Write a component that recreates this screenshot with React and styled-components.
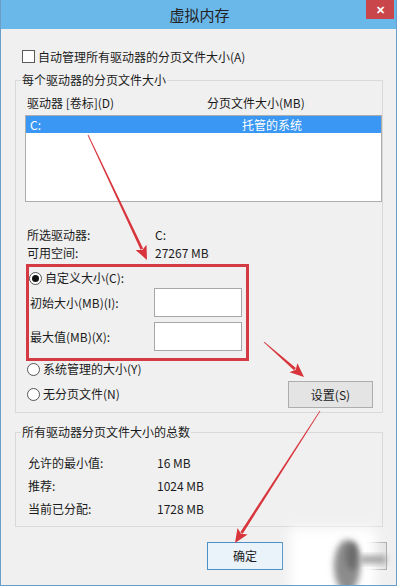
import React from 'react';
import styled, { createGlobalStyle } from 'styled-components';

const GlobalStyle = createGlobalStyle`
  html, body {
    margin: 0;
    padding: 0;
    background: #ffffff;
  }
  body {
    font-family: "Noto Sans CJK SC", "Noto Sans", "Liberation Sans", sans-serif;
    font-size: 12px;
    color: #1b1b1b;
  }
`;

const drives = [{ name: 'C:', size: '托管的系统', selected: true }];

const totals = [
  { label: '允许的最小值:', value: '16 MB' },
  { label: '推荐:', value: '1024 MB' },
  { label: '当前已分配:', value: '1728 MB' },
];

const arrows = [
  { x1: 88, y1: 135, x2: 147, y2: 260 },
  { x1: 264, y1: 342, x2: 304, y2: 377 },
  { x1: 320, y1: 411, x2: 235, y2: 543 },
];

function Arrow({ x1, y1, x2, y2 }) {
  const len = Math.hypot(x2 - x1, y2 - y1);
  const dx = (x2 - x1) / len;
  const dy = (y2 - y1) / len;
  const nx = -dy;
  const ny = dx;
  const head = 14;
  const bx = x2 - dx * head;
  const by = y2 - dy * head;
  const shaft = [
    [x1 + nx * 0.4, y1 + ny * 0.4],
    [bx + dx * 2 + nx * 1.4, by + dy * 2 + ny * 1.4],
    [bx + dx * 2 - nx * 1.4, by + dy * 2 - ny * 1.4],
    [x1 - nx * 0.4, y1 - ny * 0.4],
  ];
  const tip = [
    [x2, y2],
    [bx + nx * 6, by + ny * 6],
    [bx + dx * 3, by + dy * 3],
    [bx - nx * 6, by - ny * 6],
  ];
  const pts = (a) => a.map((p) => p.map((v) => v.toFixed(1)).join(',')).join(' ');
  return (
    <g fill="#d7353b">
      <polygon points={pts(shaft)} />
      <polygon points={pts(tip)} />
    </g>
  );
}

function App() {
  return (
    <>
      <GlobalStyle />
      <Window>
        <TitleBar>
          <span />
          <Title>虚拟内存</Title>
          <CloseButton>✕</CloseButton>
        </TitleBar>

        <Body>
          <CheckRow>
            <CheckBox />
            <span>自动管理所有驱动器的分页文件大小(A)</span>
          </CheckRow>

          <Group>
            <Legend>每个驱动器的分页文件大小</Legend>
            <ListHeader>
              <Col>驱动器 [卷标](D)</Col>
              <span>分页文件大小(MB)</span>
            </ListHeader>
            <ListBox>
              {drives.map((d) => (
                <ListItem key={d.name} $selected={d.selected}>
                  <DriveName>{d.name}</DriveName>
                  <span>{d.size}</span>
                </ListItem>
              ))}
            </ListBox>

            <InfoBlock>
              <InfoRow>
                <InfoLabel>所选驱动器:</InfoLabel>
                <span>C:</span>
              </InfoRow>
              <InfoRow>
                <InfoLabel>可用空间:</InfoLabel>
                <span>27267 MB</span>
              </InfoRow>
            </InfoBlock>

            <Highlight>
              <RadioRow>
                <Radio $checked />
                <span>自定义大小(C):</span>
              </RadioRow>
              <FieldRow>
                <FieldLabel>初始大小(MB)(I):</FieldLabel>
                <TextBox />
              </FieldRow>
              <FieldRow $gap>
                <FieldLabel>最大值(MB)(X):</FieldLabel>
                <TextBox />
              </FieldRow>
            </Highlight>

            <OptionsRow>
              <RadioStack>
                <RadioRow $outer>
                  <Radio />
                  <span>系统管理的大小(Y)</span>
                </RadioRow>
                <RadioRow $outer>
                  <Radio />
                  <span>无分页文件(N)</span>
                </RadioRow>
              </RadioStack>
              <SetButton>设置(S)</SetButton>
            </OptionsRow>
          </Group>

          <Group $second>
            <Legend>所有驱动器分页文件大小的总数</Legend>
            <TotalsList>
              {totals.map((t) => (
                <TotalRow key={t.label}>
                  <TotalLabel>{t.label}</TotalLabel>
                  <span>{t.value}</span>
                </TotalRow>
              ))}
            </TotalsList>
          </Group>

          <Footer>
            <DialogButton $default>确定</DialogButton>
            <DialogButton>取消</DialogButton>
          </Footer>
        </Body>

        <Overlay width="397" height="588" viewBox="0 0 397 588">
          <defs>
            <filter id="soft" x="-50%" y="-50%" width="200%" height="200%">
              <feGaussianBlur stdDeviation="6" />
            </filter>
            <filter id="softer" x="-50%" y="-50%" width="200%" height="200%">
              <feGaussianBlur stdDeviation="3" />
            </filter>
          </defs>
          <rect x="290" y="528" width="86" height="70" fill="#ffffff" filter="url(#soft)" />
          <ellipse cx="347" cy="566" rx="13" ry="26" fill="#8c8c8c" filter="url(#softer)" />
          <ellipse cx="352" cy="556" rx="6" ry="14" fill="#6a6a6a" filter="url(#softer)" />
          <rect x="360" y="556" width="26" height="7" fill="#9a9a9a" filter="url(#softer)" />
          {arrows.map((a, i) => (
            <Arrow key={i} {...a} />
          ))}
        </Overlay>
      </Window>
    </>
  );
}

const Window = styled.div`
  position: relative;
  width: 397px;
  height: 586px;
  box-sizing: border-box;
  background: #f0f0f0;
  border: 1px solid #6a9ec9;
  border-top: none;
  overflow: hidden;
`;

const TitleBar = styled.div`
  height: 29px;
  margin: 0 -1px;
  display: grid;
  grid-template-columns: 1fr auto 1fr;
  align-items: start;
  background: #6ab8ea;
`;

const Title = styled.div`
  font-size: 15px;
  line-height: 29px;
  color: #222;
  padding-left: 2px;
`;

const CloseButton = styled.div`
  justify-self: end;
  width: 28px;
  height: 19px;
  margin-right: 3px;
  background: #c9474b;
  color: #fff;
  font-size: 11px;
  font-weight: bold;
  line-height: 19px;
  text-align: center;
`;

const Body = styled.div`
  padding: 0 13px 0 14px;
`;

const CheckRow = styled.div`
  display: flex;
  align-items: center;
  gap: 3px;
  height: 16px;
  margin-top: 19px;
  padding-left: 7px;
`;

const CheckBox = styled.span`
  width: 11px;
  height: 11px;
  border: 1px solid #5a5a5a;
  background: #fff;
`;

const Group = styled.fieldset`
  margin: ${(p) => (p.$second ? '11px' : '8px')} 0 0 0;
  padding: 0 0 ${(p) => (p.$second ? '6px' : '4px')} 0;
  border: 1px solid #d9d9d9;
  min-width: 0;
`;

const Legend = styled.legend`
  margin-left: 5px;
  padding: 0 1px;
  line-height: 16px;
`;

const ListHeader = styled.div`
  display: flex;
  height: 16px;
  line-height: 16px;
  margin-top: 7px;
  padding-left: 11px;
`;

const Col = styled.span`
  width: 180px;
`;

const ListBox = styled.div`
  height: 85px;
  margin: 4px 0 0 9px;
  border: 1px solid #adadad;
  background: #fff;
`;

const ListItem = styled.div`
  display: flex;
  height: 17px;
  line-height: 17px;
  padding-left: 4px;
  background: ${(p) => (p.$selected ? '#3a97f3' : 'transparent')};
  color: ${(p) => (p.$selected ? '#fff' : 'inherit')};
`;

const DriveName = styled.span`
  width: 212px;
`;

const InfoBlock = styled.div`
  display: flex;
  flex-direction: column;
  gap: 2px;
  margin-top: 25px;
  padding-left: 11px;
`;

const InfoRow = styled.div`
  display: flex;
  height: 16px;
  line-height: 16px;
`;

const InfoLabel = styled.span`
  width: 128px;
`;

const Highlight = styled.div`
  width: 217px;
  margin: 3px 0 0 10px;
  padding: 3px 0 7px 0;
  border: 3px solid #d43a43;
`;

const RadioRow = styled.div`
  display: flex;
  align-items: center;
  gap: 3px;
  height: 16px;
  line-height: 16px;
  padding-left: ${(p) => (p.$outer ? '11px' : '0')};
`;

const Radio = styled.span`
  position: relative;
  width: 11px;
  height: 11px;
  border: 1px solid #555;
  border-radius: 50%;
  background: #fff;
  flex-shrink: 0;

  &::after {
    content: '';
    display: ${(p) => (p.$checked ? 'block' : 'none')};
    position: absolute;
    left: 2px;
    top: 2px;
    width: 7px;
    height: 7px;
    border-radius: 50%;
    background: #111;
  }
`;

const FieldRow = styled.div`
  display: flex;
  align-items: center;
  margin-top: ${(p) => (p.$gap ? '5px' : '2px')};
  padding-left: 1px;
`;

const FieldLabel = styled.span`
  width: 124px;
`;

const TextBox = styled.div`
  width: 86px;
  height: 27px;
  border: 1px solid #a7a7a7;
  background: #fff;
`;

const OptionsRow = styled.div`
  display: flex;
  justify-content: space-between;
  align-items: flex-start;
`;

const RadioStack = styled.div`
  display: flex;
  flex-direction: column;
  gap: 9px;
`;

const SetButton = styled.div`
  width: 83px;
  height: 25px;
  margin: 20px 9px 0 0;
  border: 1px solid #adadad;
  background: #e4e4e4;
  line-height: 25px;
  text-align: center;
`;

const TotalsList = styled.div`
  margin-top: 11px;
  padding-left: 12px;
`;

const TotalRow = styled.div`
  display: flex;
  height: 23px;
  line-height: 23px;
`;

const TotalLabel = styled.span`
  width: 129px;
`;

const Footer = styled.div`
  display: flex;
  justify-content: flex-end;
  gap: 28px;
  margin: 15px -4px 0 0;
`;

const DialogButton = styled.div`
  width: 74px;
  height: 26px;
  border: 1px solid ${(p) => (p.$default ? '#4a90c8' : '#adadad')};
  background: ${(p) => (p.$default ? '#eaf2fa' : '#e4e4e4')};
  line-height: 26px;
  text-align: center;
`;

const Overlay = styled.svg`
  position: absolute;
  left: -1px;
  top: 0;
  pointer-events: none;
`;

export default App;
